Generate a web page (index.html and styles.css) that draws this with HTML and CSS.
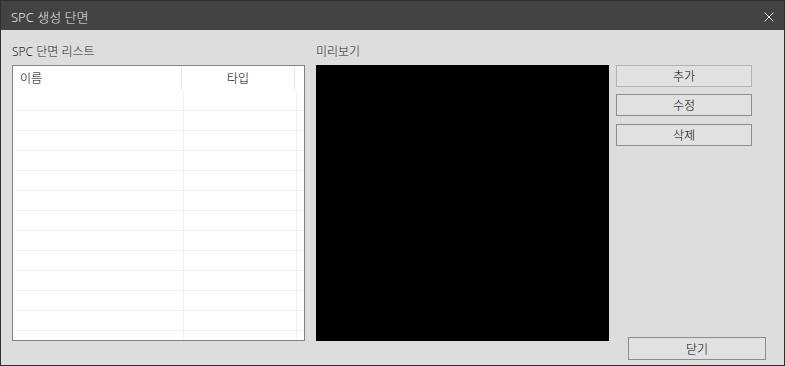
FILE: index.html
```html
<!DOCTYPE html>
<html lang="ko">
<head>
    <meta charset="UTF-8">
    <title>SPC 생성 단면</title>
<link rel="stylesheet" href="styles.css">
</head>
<body>

<div class="window">
    <div class="title-bar">
        <span class="title">SPC 생성 단면</span>
        <span class="close-x">
            <svg width="10" height="10" viewBox="0 0 10 10">
                <path d="M0.5 0.5 L9.5 9.5 M9.5 0.5 L0.5 9.5" stroke="#e6e6e6" stroke-width="1" fill="none"/>
            </svg>
        </span>
    </div>

    <div class="content">
        <div class="panel">
            <div class="panel-label">SPC 단면 리스트</div>
            <div class="list-box">
                <div class="list-head">
                    <div class="head-cell name-col">이름</div>
                    <div class="head-cell type-col">타입</div>
                </div>
                <div class="list-row"><div class="cell name-col"></div><div class="cell type-col"></div></div>
                <div class="list-row"><div class="cell name-col"></div><div class="cell type-col"></div></div>
                <div class="list-row"><div class="cell name-col"></div><div class="cell type-col"></div></div>
                <div class="list-row"><div class="cell name-col"></div><div class="cell type-col"></div></div>
                <div class="list-row"><div class="cell name-col"></div><div class="cell type-col"></div></div>
                <div class="list-row"><div class="cell name-col"></div><div class="cell type-col"></div></div>
                <div class="list-row"><div class="cell name-col"></div><div class="cell type-col"></div></div>
                <div class="list-row"><div class="cell name-col"></div><div class="cell type-col"></div></div>
                <div class="list-row"><div class="cell name-col"></div><div class="cell type-col"></div></div>
                <div class="list-row"><div class="cell name-col"></div><div class="cell type-col"></div></div>
                <div class="list-row"><div class="cell name-col"></div><div class="cell type-col"></div></div>
                <div class="list-row"><div class="cell name-col"></div><div class="cell type-col"></div></div>
                <div class="list-row"><div class="cell name-col"></div><div class="cell type-col"></div></div>
            </div>
        </div>

        <div class="panel">
            <div class="panel-label">미리보기</div>
            <div class="preview"></div>
        </div>

        <div class="actions">
            <button class="btn btn-light">추가</button>
            <button class="btn">수정</button>
            <button class="btn btn-last">삭제</button>
            <button class="btn btn-close">닫기</button>
        </div>
    </div>
</div>

</body>
</html>
```

FILE: styles.css
```css
body {
  margin: 0;
  font-family: "Noto Sans", "Noto Sans CJK KR", sans-serif;
  background-color: #dddddd;
}

.window {
  width: 785px;
  height: 366px;
  box-sizing: border-box;
  border: 1px solid #2f2f2f;
  background-color: #dddddd;
  display: flex;
  flex-direction: column;
}

.title-bar {
  height: 29px;
  background-color: #434343;
  display: flex;
  align-items: center;
  justify-content: space-between;
  padding: 2px 10px 0 10px;
  box-sizing: border-box;
}

.title {
  color: #e8e8e8;
  font-size: 13px;
  font-weight: 300;
}

.close-x {
  display: flex;
}

.content {
  flex: 1;
  display: flex;
  padding: 14px 18px 5px 11px;
}

.panel {
  width: 293px;
  margin-right: 11px;
  display: flex;
  flex-direction: column;
}

.panel + .panel {
  margin-right: 7px;
}

.panel-label {
  font-size: 12px;
  font-weight: 300;
  line-height: 16px;
  height: 16px;
  margin-bottom: 5px;
  color: #1e1e1e;
}

.list-box {
  height: 276px;
  box-sizing: border-box;
  border: 1px solid #838383;
  background-color: #ffffff;
  overflow: hidden;
}

.list-head {
  display: flex;
  height: 25px;
  padding-top: 1px;
  box-sizing: border-box;
}

.head-cell {
  height: 23px;
  border-right: 1px solid #e5e5e5;
  font-size: 12px;
  font-weight: 300;
  line-height: 23px;
  color: #000;
  box-sizing: border-box;
}

.head-cell.name-col {
  width: 169px;
  padding-left: 7px;
}

.head-cell.type-col {
  width: 113px;
  text-align: center;
}

.list-row {
  display: flex;
  height: 20px;
  margin-left: 1px;
  box-sizing: border-box;
  border-bottom: 1px solid #f0f0f0;
}

.cell {
  height: 100%;
  border-right: 1px solid #f0f0f0;
  box-sizing: border-box;
}

.cell.name-col {
  width: 170px;
}

.cell.type-col {
  width: 113px;
}

.preview {
  height: 276px;
  background-color: #000000;
}

.actions {
  width: 150px;
  display: flex;
  flex-direction: column;
  align-items: flex-start;
  padding-top: 21px;
}

.btn {
  width: 136px;
  height: 22px;
  margin: 0 0 7px 0;
  padding: 0;
  background-color: #e1e1e1;
  border: 1px solid #8c8c8c;
  font-family: "Noto Sans", "Noto Sans CJK KR", sans-serif;
  font-size: 12px;
  font-weight: 300;
  color: #000;
}

.btn-light {
  border-color: #b4b4b4;
}

.btn-last {
  margin-top: 1px;
}

.btn-close {
  width: 138px;
  height: 23px;
  margin: auto 0 0 12px;
}
```
